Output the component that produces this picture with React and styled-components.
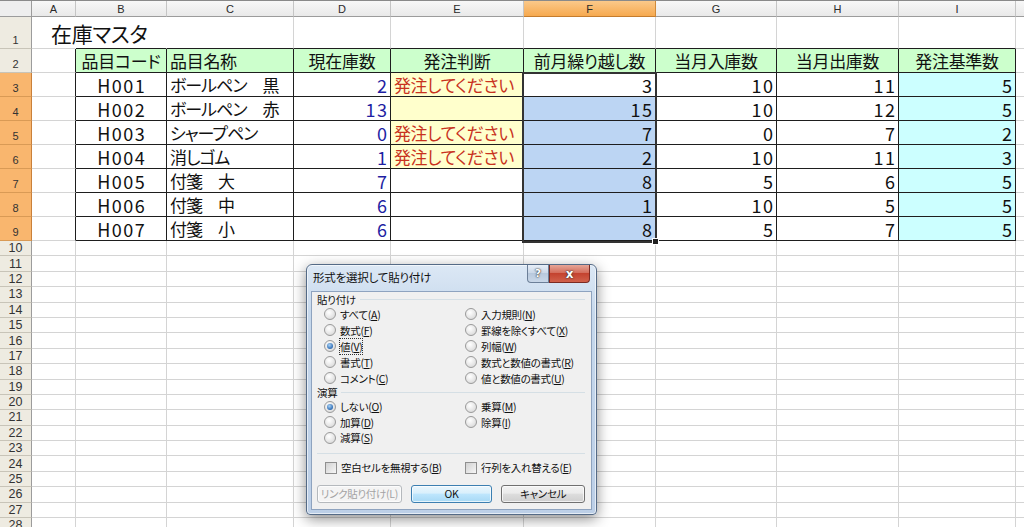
import styled, { createGlobalStyle } from 'styled-components';

const GlobalStyle = createGlobalStyle`
  html, body { margin: 0; padding: 0; }
  body {
    width: 1024px;
    height: 527px;
    overflow: hidden;
    background: #fff;
    font-family: "Noto Sans CJK JP", "Liberation Sans", sans-serif;
  }
`;

const COLS = ['A', 'B', 'C', 'D', 'E', 'F', 'G', 'H', 'I', ''];
const ROW_HEIGHTS = [32, 24, 24, 24, 24, 24, 24, 24, 24, ...Array(19).fill(15.4)];

const items = [
  ['H001', 'ボールペン　黒', 2, '発注してください', 3, 10, 11, 5],
  ['H002', 'ボールペン　赤', 13, '', 15, 10, 12, 5],
  ['H003', 'シャープペン', 0, '発注してください', 7, 0, 7, 2],
  ['H004', '消しゴム', 1, '発注してください', 2, 10, 11, 3],
  ['H005', '付箋　大', 7, '', 8, 5, 6, 5],
  ['H006', '付箋　中', 6, '', 1, 10, 5, 5],
  ['H007', '付箋　小', 6, '', 8, 5, 7, 5],
];

const headers = ['品目コード', '品目名称', '現在庫数', '発注判断', '前月繰り越し数', '当月入庫数', '当月出庫数', '発注基準数'];

const Sheet = styled.div`
  position: relative;
  display: grid;
  grid-template-columns: 32px 44px 91px 127px 97px 133px 132px 121px 122px 117px 40px;
  grid-template-rows: 16px ${ROW_HEIGHTS.map((h) => `${h}px`).join(' ')};
  border-top: 1px solid #8a8a8a;
  font-feature-settings: "palt";
`;

const Corner = styled.div`
  background: #eeeeee;
  border-right: 1px solid #9c9c9c;
  border-bottom: 1px solid #9c9c9c;
`;

const ColHead = styled.div`
  display: flex;
  align-items: center;
  justify-content: center;
  font-family: "Liberation Sans", sans-serif;
  font-size: 11px;
  color: #2a2a2a;
  background: ${(p) => (p.$active ? 'linear-gradient(#fbc98a, #f6a94f)' : 'linear-gradient(#f8f8f8, #e9e9e9)')};
  border-right: 1px solid ${(p) => (p.$active ? '#d08a3a' : '#c5c5c5')};
  border-bottom: 1px solid ${(p) => (p.$active ? '#c47c2e' : '#9c9c9c')};
`;

const RowHead = styled.div`
  display: flex;
  align-items: ${(p) => (p.$tall ? 'flex-end' : 'center')};
  justify-content: center;
  padding-bottom: ${(p) => (p.$tall ? '2px' : '0')};
  box-sizing: border-box;
  font-family: "Liberation Sans", sans-serif;
  font-size: ${(p) => (p.$tall ? '11px' : '12.5px')};
  color: #333;
  background: ${(p) => (p.$active ? '#f9b66e' : '#eeebe1')};
  border-right: 1px solid ${(p) => (p.$active ? '#c9803a' : '#9c9c9c')};
  border-bottom: 1px solid ${(p) => (p.$active ? '#d99a55' : '#c8c4b8')};
`;

const Cell = styled.div`
  display: flex;
  align-items: center;
  justify-content: ${(p) => p.$align || 'flex-start'};
  padding: 0 3px;
  box-sizing: border-box;
  min-width: 0;
  white-space: nowrap;
  font-size: 17px;
  letter-spacing: ${(p) => p.$ls || '0'};
  color: ${(p) => p.$color || '#111'};
  background: ${(p) => p.$bg || '#fff'};
  border-right: 1px solid ${(p) => (p.$noR ? 'transparent' : p.$rDark ? '#1e1e1e' : '#d4d4d4')};
  border-bottom: 1px solid ${(p) => (p.$bDark ? '#1e1e1e' : '#d4d4d4')};
`;

const TitleCell = styled(Cell)`
  position: relative;
  z-index: 1;
  padding-left: 19px;
`;

const Num = styled.span`
  font-size: 18px;
  letter-spacing: 1.5px;
  margin-right: -1.5px;
`;

const Title = styled.span`
  font-size: 21px;
  letter-spacing: -0.3px;
  color: #111;
`;

/* the range selection frame F3:F9 drawn over the cells */
const SelectionBox = styled.div`
  position: absolute;
  left: 522px;
  top: 71px;
  width: 135px;
  height: 171px;
  box-sizing: border-box;
  border: 2px solid #333;
  z-index: 2;
  pointer-events: none;
`;

const FillHandle = styled.div`
  position: absolute;
  right: -4px;
  bottom: -4px;
  width: 5px;
  height: 5px;
  background: #222;
  border: 1px solid #fff;
`;

const Dialog = styled.div`
  position: absolute;
  left: 306px;
  top: 264px;
  width: 291px;
  height: 251px;
  box-sizing: border-box;
  display: flex;
  flex-direction: column;
  padding: 0 4px 4px;
  border: 1px solid #546a86;
  border-radius: 6px 6px 4px 4px;
  background: linear-gradient(#dce8f5, #c6d8ec 20%, #bccfe7);
  box-shadow: 0 4px 14px rgba(0, 0, 0, 0.45), inset 0 0 0 1px rgba(255, 255, 255, 0.6);
  font-feature-settings: "palt";
  z-index: 5;
`;

const TitleBar = styled.div`
  height: 26px;
  display: flex;
  justify-content: space-between;
  align-items: flex-start;
`;

const TitleText = styled.span`
  font-size: 11.5px;
  letter-spacing: -0.2px;
  line-height: 25px;
  padding-left: 2px;
  color: #111;
`;

const TitleButtons = styled.div`
  display: flex;
  margin-right: 2px;
`;

const CapButton = styled.div`
  width: ${(p) => (p.$close ? '41px' : '22px')};
  height: 18px;
  box-sizing: border-box;
  display: flex;
  align-items: center;
  justify-content: center;
  border: 1px solid ${(p) => (p.$close ? '#7b2a22' : '#6c7f98')};
  border-top: none;
  border-radius: ${(p) => (p.$close ? '0 0 4px 0' : '0 0 0 4px')};
  background: ${(p) =>
    p.$close
      ? 'linear-gradient(#e6a597, #d46e5c 45%, #c4432f 50%, #d1614b)'
      : 'linear-gradient(#e7eef7, #cbd8e8 45%, #b8c9dd 50%, #c9d7e8)'};
  color: #fff;
  font-family: "DejaVu Sans", sans-serif;
  font-weight: bold;
  font-size: ${(p) => (p.$close ? '12px' : '11px')};
  text-shadow: 0 0 2px #333, 0 0 1px #222;
`;

const Client = styled.div`
  flex: 1;
  background: #f0f0f0;
  border: 1px solid #8ea3bf;
  padding: 0 6px 0 5px;
  display: flex;
  flex-direction: column;
  font-size: 10.5px;
  letter-spacing: -0.3px;
  color: #111;
`;

const GroupLabel = styled.div`
  display: flex;
  align-items: center;
  gap: 4px;
  height: ${(p) => p.$h || '14px'};
  &::after {
    content: '';
    flex: 1;
    border-top: 1px solid #d5dfe5;
  }
`;

const OptionGrid = styled.div`
  display: grid;
  grid-template-columns: 141px 1fr;
  grid-auto-rows: ${(p) => p.$row || '16px'};
  padding-left: 7px;
`;

const Option = styled.label`
  display: flex;
  align-items: center;
  gap: 4px;
  white-space: nowrap;
`;

const Radio = styled.span`
  width: 12px;
  height: 12px;
  flex: none;
  box-sizing: border-box;
  border-radius: 50%;
  border: 1px solid #9a9a9a;
  background: radial-gradient(circle at 40% 35%, #ffffff, #e4e4e4 60%, #cfcfcf);
  display: flex;
  align-items: center;
  justify-content: center;
  &::after {
    content: '';
    display: ${(p) => (p.$on ? 'block' : 'none')};
    width: 6px;
    height: 6px;
    border-radius: 50%;
    background: radial-gradient(circle at 40% 35%, #a9d2f5, #2f6db5 70%, #1b4f8f);
  }
`;

const Focus = styled.span`
  outline: 1px dotted #333;
  outline-offset: 0;
`;

const Key = styled.span`
  text-decoration: underline;
`;

const Divider = styled.div`
  border-top: 1px solid #d5dfe5;
  margin: ${(p) => p.$m || '0'};
`;

const CheckRow = styled.div`
  display: grid;
  grid-template-columns: 140px 1fr;
  padding-left: 8px;
  height: 16px;
  margin-top: 6px;
`;

const Box = styled.span`
  width: 12px;
  height: 12px;
  flex: none;
  box-sizing: border-box;
  border: 1px solid #8f8f8f;
  background: linear-gradient(135deg, #d2d2d2, #f6f6f6);
`;

const ButtonRow = styled.div`
  display: flex;
  gap: 9px;
  margin-top: 9px;
`;

const Button = styled.div`
  width: ${(p) => p.$w || '82px'};
  height: 18px;
  box-sizing: border-box;
  display: flex;
  align-items: center;
  justify-content: center;
  white-space: nowrap;
  border-radius: 3px;
  font-size: 10.5px;
  color: ${(p) => (p.$disabled ? '#a3a3a3' : '#111')};
  border: 1px solid ${(p) => (p.$primary ? '#3c7fb1' : p.$disabled ? '#b5b9bd' : '#707070')};
  background: ${(p) =>
    p.$primary
      ? 'linear-gradient(#eaf6fd, #d9f0fc 45%, #bee6fd 50%, #a7d9f5)'
      : p.$disabled
        ? '#f4f4f4'
        : 'linear-gradient(#f2f2f2, #ebebeb 45%, #dddddd 50%, #cfcfcf)'};
  box-shadow: inset 0 0 0 1px rgba(255, 255, 255, 0.7);
`;

const pasteLeft = [
  ['すべて', 'A'],
  ['数式', 'F'],
  ['値', 'V', true],
  ['書式', 'T'],
  ['コメント', 'C'],
];
const pasteRight = [
  ['入力規則', 'N'],
  ['罫線を除くすべて', 'X'],
  ['列幅', 'W'],
  ['数式と数値の書式', 'R'],
  ['値と数値の書式', 'U'],
];
const opLeft = [
  ['しない', 'O', true],
  ['加算', 'D'],
  ['減算', 'S'],
];
const opRight = [
  ['乗算', 'M'],
  ['除算', 'I'],
];

function Label({ text, k }) {
  return (
    <span>
      {text}(<Key>{k}</Key>)
    </span>
  );
}

function OptionList({ left, right }) {
  const out = [];
  for (let i = 0; i < left.length; i++) {
    const [t, k, on] = left[i];
    out.push(
      <Option key={`l${i}`}>
        <Radio $on={on} />
        {on && t === '値' ? (
          <Focus>
            <Label text={t} k={k} />
          </Focus>
        ) : (
          <Label text={t} k={k} />
        )}
      </Option>
    );
    if (right[i]) {
      out.push(
        <Option key={`r${i}`}>
          <Radio />
          <Label text={right[i][0]} k={right[i][1]} />
        </Option>
      );
    } else {
      out.push(<span key={`r${i}`} />);
    }
  }
  return out;
}

function PasteSpecialDialog() {
  return (
    <Dialog>
      <TitleBar>
        <TitleText>形式を選択して貼り付け</TitleText>
        <TitleButtons>
          <CapButton>?</CapButton>
          <CapButton $close>x</CapButton>
        </TitleButtons>
      </TitleBar>
      <Client>
        <GroupLabel>貼り付け</GroupLabel>
        <OptionGrid>
          <OptionList left={pasteLeft} right={pasteRight} />
        </OptionGrid>
        <GroupLabel $h="13px">演算</GroupLabel>
        <OptionGrid $row="15.5px">
          <OptionList left={opLeft} right={opRight} />
        </OptionGrid>
        <Divider $m="7px 0 0" />
        <CheckRow>
          <Option>
            <Box />
            <Label text="空白セルを無視する" k="B" />
          </Option>
          <Option>
            <Box />
            <Label text="行列を入れ替える" k="E" />
          </Option>
        </CheckRow>
        <ButtonRow>
          <Button $disabled $w="85px">リンク貼り付け(L)</Button>
          <Button $primary>OK</Button>
          <Button $w="84px">キャンセル</Button>
        </ButtonRow>
      </Client>
    </Dialog>
  );
}

function renderRow(r) {
  // r: spreadsheet row number (1-based)
  const cells = [];
  const active = r >= 3 && r <= 9;
  cells.push(
    <RowHead key={`${r}-h`} $active={active} $tall={r <= 9}>
      {r}
    </RowHead>
  );
  COLS.forEach((c, ci) => {
    const key = `${r}-c${ci}`;
    const inTableCol = ci >= 1 && ci <= 8;
    if (r === 1) {
      if (ci === 0)
        cells.push(
          <TitleCell key={key} $noR>
            <Title>在庫マスタ</Title>
          </TitleCell>
        );
      else cells.push(<Cell key={key} $bDark={inTableCol} $noR={ci === 1} />);
      return;
    }
    if (r === 2) {
      if (ci === 0) cells.push(<Cell key={key} $rDark />);
      else if (inTableCol)
        cells.push(
          <Cell key={key} $bg="#ccffcc" $rDark $bDark $ls="-0.3px" $align={ci === 2 ? 'flex-start' : 'center'}>
            {headers[ci - 1]}
          </Cell>
        );
      else cells.push(<Cell key={key} />);
      return;
    }
    if (r >= 3 && r <= 9) {
      const row = items[r - 3];
      if (ci === 0) {
        cells.push(<Cell key={key} $rDark />);
        return;
      }
      if (!inTableCol) {
        cells.push(<Cell key={key} />);
        return;
      }
      const v = row[ci - 1];
      if (ci === 1)
        cells.push(
          <Cell key={key} $rDark $bDark $align="center">
            <Num>{v}</Num>
          </Cell>
        );
      else if (ci === 2)
        cells.push(
          <Cell key={key} $rDark $bDark $ls="-1px">
            {v}
          </Cell>
        );
      else if (ci === 3)
        cells.push(
          <Cell key={key} $rDark $bDark $align="flex-end" $color="#1f1fa3">
            <Num>{v}</Num>
          </Cell>
        );
      else if (ci === 4)
        cells.push(
          <Cell key={key} $rDark $bDark $ls="-0.4px" $bg={r <= 6 ? '#ffffcc' : '#fff'} $color="#c8321e">
            {v}
          </Cell>
        );
      else
        cells.push(
          <Cell
            key={key}
            $rDark
            $bDark
            $align="flex-end"
            $bg={ci === 5 ? (r === 3 ? '#fff' : '#bcd5f3') : ci === 8 ? '#ccffff' : '#fff'}
          >
            <Num>{v}</Num>
          </Cell>
        );
      return;
    }
    cells.push(<Cell key={key} />);
  });
  return cells;
}

export default function App() {
  const rows = [];
  for (let r = 1; r <= 28; r++) rows.push(...renderRow(r));
  return (
    <>
      <GlobalStyle />
      <Sheet>
        <Corner />
        {COLS.map((c, i) => (
          <ColHead key={`col${i}`} $active={c === 'F'}>
            {c}
          </ColHead>
        ))}
        {rows}
        <SelectionBox>
          <FillHandle />
        </SelectionBox>
      </Sheet>
      <PasteSpecialDialog />
    </>
  );
}
